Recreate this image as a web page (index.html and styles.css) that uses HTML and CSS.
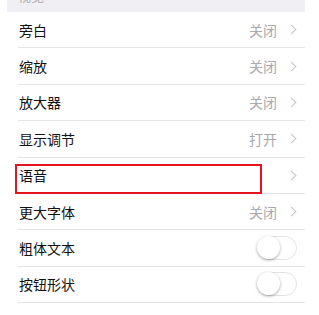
FILE: index.html
```html
<!DOCTYPE html>
<html lang="zh-CN">
  <head>
    <meta charset="UTF-8" />
    <meta name="viewport" content="width=device-width, initial-scale=1.0" />
    <title>辅助功能</title>
    <link rel="stylesheet" href="styles.css">
  </head>
  <body>
    <div class="screen">
      <div class="band"><span class="bandText">视觉</span></div>
      <ul class="list">
        <li class="row"><span class="label">旁白</span><span class="value">关闭</span><span class="chev"></span></li>
        <li class="row"><span class="label">缩放</span><span class="value">关闭</span><span class="chev"></span></li>
        <li class="row"><span class="label">放大器</span><span class="value">关闭</span><span class="chev"></span></li>
        <li class="row"><span class="label">显示调节</span><span class="value">打开</span><span class="chev"></span></li>
        <li class="row"><span class="label">语音</span><span class="chev"></span><span class="mark"></span></li>
        <li class="row"><span class="label">更大字体</span><span class="value">关闭</span><span class="chev"></span></li>
        <li class="row"><span class="label">粗体文本</span><span class="toggle"></span></li>
        <li class="row"><span class="label">按钮形状</span><span class="toggle"></span></li>
        <li class="row"><span class="label">增强对比度</span><span class="chev"></span></li>
      </ul>
    </div>
  </body>
</html>
```
FILE: styles.css
```css
body {
  margin: 0;
  background: #fff;
  font-family: "Noto Sans CJK SC", "Liberation Sans", sans-serif;
  overflow: hidden;
}
.screen {
  width: 298px;
  margin-left: 7px;
}
.band {
  height: 12px;
  background: #efeff4;
  overflow: hidden;
}
.bandText {
  display: block;
  margin: -14px 0 0 11px;
  font-size: 13px;
  color: #a8a8ad;
}
.list {
  list-style: none;
  margin: 0 0 0 11px;
  padding: 0;
}
.row {
  position: relative;
  display: flex;
  align-items: center;
  box-sizing: border-box;
  height: 36.4px;
  padding: 0 8px 0 1px;
  border-bottom: 1px solid #e4e4e8;
}
.label {
  flex: 1;
  font-size: 14px;
  color: #111;
}
.value {
  font-size: 14px;
  color: #a8a8ad;
  margin-right: 11px;
}
.chev {
  width: 6px;
  height: 6px;
  border-top: 1.3px solid #c4c4c9;
  border-right: 1.3px solid #c4c4c9;
  transform: rotate(45deg);
  margin-right: 2px;
}
.toggle {
  position: relative;
  width: 38px;
  height: 22px;
  border: 1px solid #e3e3e6;
  border-radius: 12px;
  background: #fff;
}
.toggle::before {
  content: "";
  position: absolute;
  left: -1px;
  top: -1px;
  width: 23px;
  height: 23px;
  border-radius: 50%;
  background: #fff;
  box-shadow: 0 1px 3px rgba(0, 0, 0, 0.35);
}
.mark {
  position: absolute;
  left: -3px;
  top: 6px;
  width: 243px;
  height: 26px;
  border: 2px solid #e5141e;
}
```
